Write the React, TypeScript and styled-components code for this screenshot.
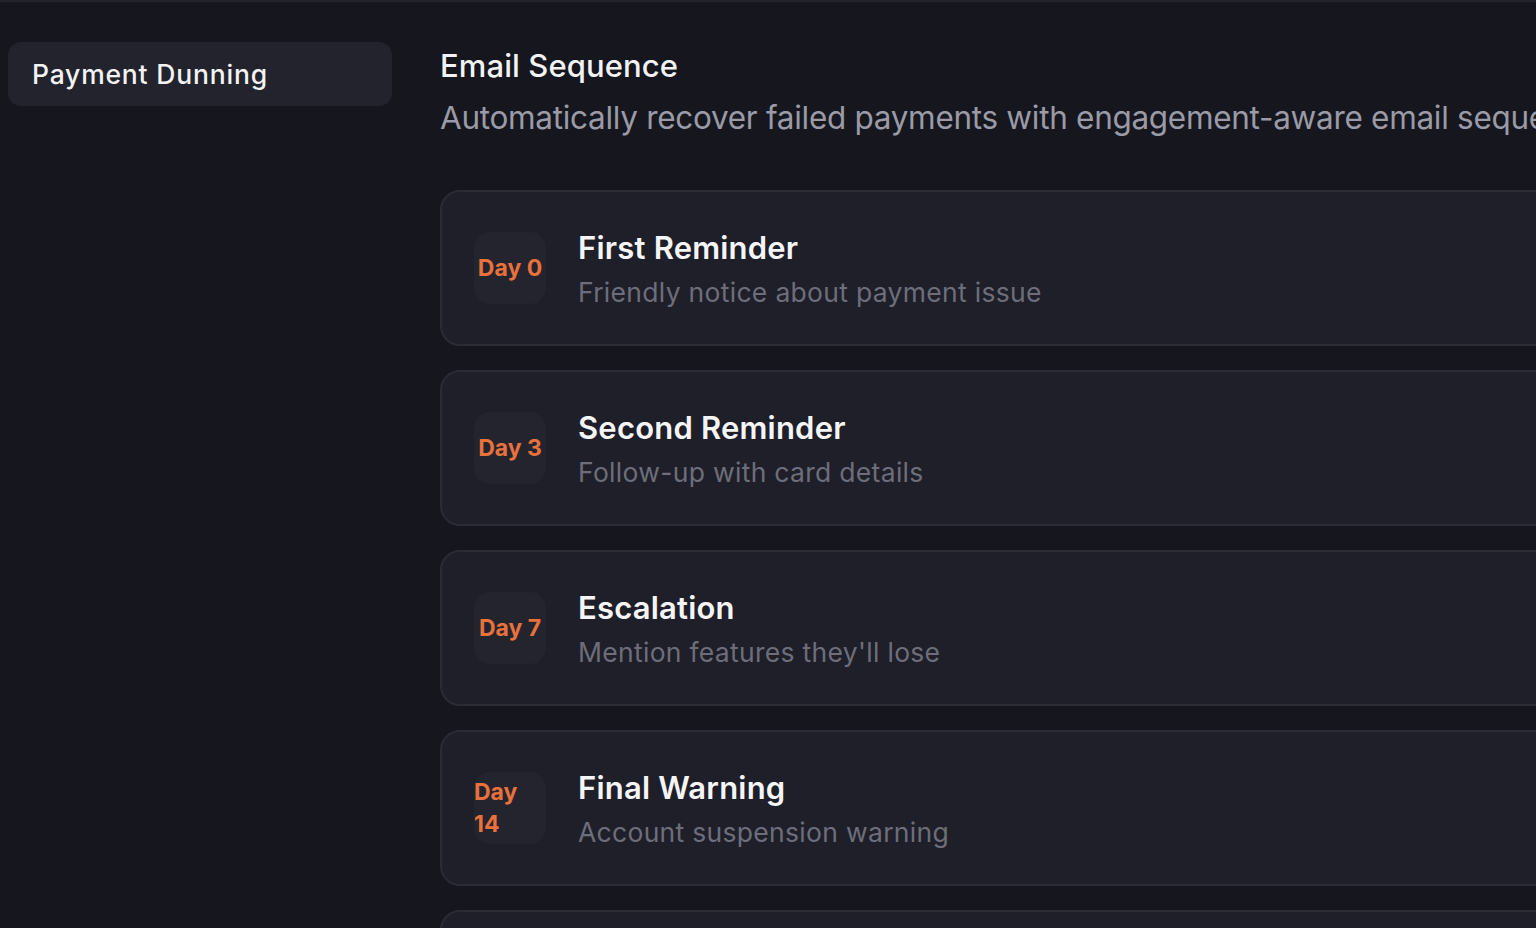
import React from "react";
import styled, { createGlobalStyle } from "styled-components";

const Global = createGlobalStyle`
  html, body {
    margin: 0;
    padding: 0;
    background: #15161e;
    overflow: hidden;
  }
  * { box-sizing: border-box; }
  body {
    font-family: Inter, "Noto Sans", sans-serif;
    -webkit-font-smoothing: antialiased;
  }
`;

const Page = styled.div`
  width: 1536px;
  height: 928px;
  border-top: 2px solid #20212a;
  display: grid;
  grid-template-columns: 384px 1400px;
  column-gap: 48px;
  padding: 40px 0 0 8px;
  overflow: hidden;
`;

const Sidebar = styled.nav`
  display: flex;
  flex-direction: column;
  gap: 8px;
`;

const NavItem = styled.div<{ $active?: boolean }>`
  height: 64px;
  display: flex;
  align-items: center;
  padding: 0 24px;
  border-radius: 13px;
  background: ${(p) => (p.$active ? "#22232c" : "transparent")};
  color: #f3f3f5;
  font-size: 26.5px;
  font-weight: 500;
  letter-spacing: 0.8px;
`;

const Main = styled.main`
  display: flex;
  flex-direction: column;
  padding-top: 4px;
`;

const Heading = styled.h1`
  margin: 0;
  font-size: 31px;
  line-height: 40px;
  font-weight: 500;
  color: #f2f2f4;
  letter-spacing: 0.1px;
`;

const Lead = styled.p`
  margin: 10px 0 0;
  font-size: 31.5px;
  line-height: 44px;
  font-weight: 400;
  color: #9a9ba6;
  white-space: nowrap;
  letter-spacing: -0.3px;
`;

const List = styled.div`
  margin-top: 50px;
  display: flex;
  flex-direction: column;
  gap: 24px;
`;

const Card = styled.div`
  height: 156px;
  display: flex;
  align-items: center;
  gap: 32px;
  padding: 0 32px;
  border: 2px solid #2a2b35;
  border-radius: 20px;
  background: #1e1f29;
`;

const Badge = styled.div`
  width: 72px;
  height: 72px;
  flex: none;
  display: flex;
  align-items: center;
  justify-content: center;
  border-radius: 16px;
  background: #23242e;
  color: #e8713c;
  font-size: 23px;
  line-height: 32px;
  font-weight: 700;
  letter-spacing: 0px;
`;

const Text = styled.div`
  display: flex;
  flex-direction: column;
  gap: 6px;
  padding-top: 2px;
`;

const Title = styled.div`
  font-size: 31px;
  line-height: 40px;
  font-weight: 600;
  color: #f5f5f7;
  letter-spacing: 0.2px;
`;

const Sub = styled.div`
  font-size: 26.5px;
  line-height: 36px;
  font-weight: 400;
  color: #6d6e7a;
  letter-spacing: 0.3px;
`;

const steps = [
  { day: "Day 0", title: "First Reminder", sub: "Friendly notice about payment issue" },
  { day: "Day 3", title: "Second Reminder", sub: "Follow-up with card details" },
  { day: "Day 7", title: "Escalation", sub: "Mention features they'll lose" },
  { day: "Day 14", title: "Final Warning", sub: "Account suspension warning" },
  { day: "Day 21", title: "Account Suspended", sub: "Access has been paused" },
];

export default function App() {
  return (
    <>
      <Global />
      <Page>
        <Sidebar>
          <NavItem $active>Payment Dunning</NavItem>
        </Sidebar>
        <Main>
          <Heading>Email Sequence</Heading>
          <Lead>
            Automatically recover failed payments with engagement-aware email sequences
          </Lead>
          <List>
            {steps.map((s) => (
              <Card key={s.day}>
                <Badge>
                  <span>{s.day}</span>
                </Badge>
                <Text>
                  <Title>{s.title}</Title>
                  <Sub>{s.sub}</Sub>
                </Text>
              </Card>
            ))}
          </List>
        </Main>
      </Page>
    </>
  );
}
